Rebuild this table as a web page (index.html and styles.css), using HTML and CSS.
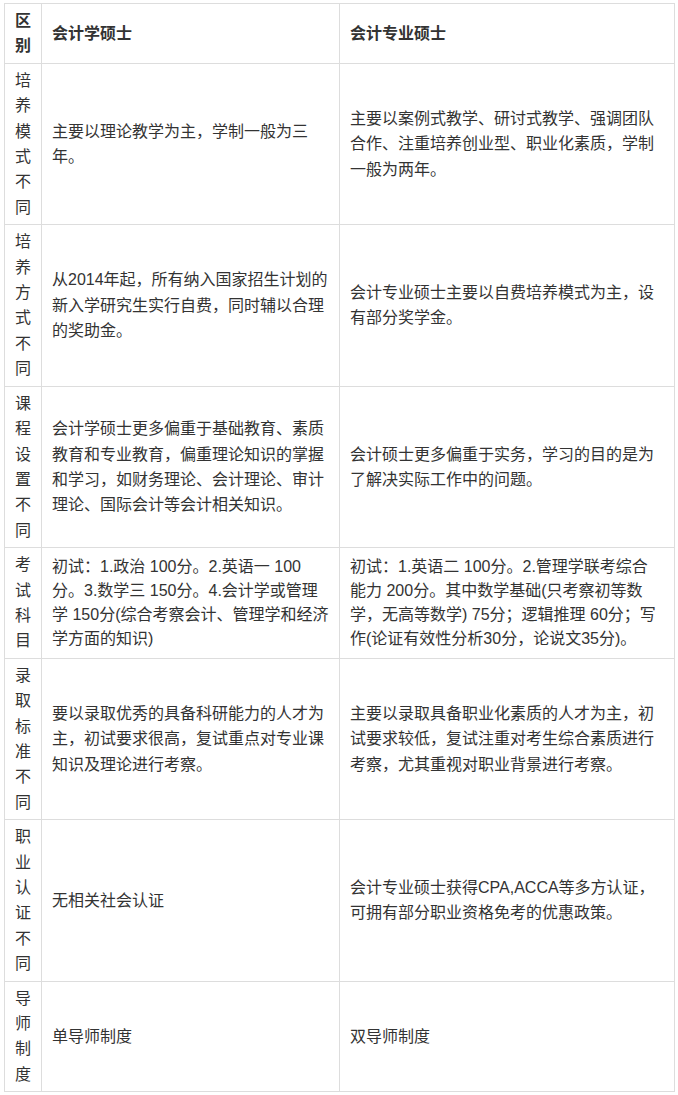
FILE: index.html
```html
<!DOCTYPE html>
<html lang="zh-CN">
<head>
<meta charset="utf-8">
<title>会计学硕士与会计专业硕士区别</title>
<link rel="stylesheet" href="styles.css">
</head>
<body>
<div class="page">
  <table class="compare">
    <colgroup>
      <col class="c1">
      <col class="c2">
      <col class="c3">
    </colgroup>
    <thead>
      <tr>
        <th>区别</th>
        <th>会计学硕士</th>
        <th>会计专业硕士</th>
      </tr>
    </thead>
    <tbody>
      <tr>
        <td>培养模式不同</td>
        <td>主要以理论教学为主，学制一般为三年。</td>
        <td>主要以案例式教学、研讨式教学、强调团队合作、注重培养创业型、职业化素质，学制一般为两年。</td>
      </tr>
      <tr>
        <td>培养方式不同</td>
        <td>从2014年起，所有纳入国家招生计划的新入学研究生实行自费，同时辅以合理的奖助金。</td>
        <td>会计专业硕士主要以自费培养模式为主，设有部分奖学金。</td>
      </tr>
      <tr>
        <td>课程设置不同</td>
        <td>会计学硕士更多偏重于基础教育、素质教育和专业教育，偏重理论知识的掌握和学习，如财务理论、会计理论、审计理论、国际会计等会计相关知识。</td>
        <td>会计硕士更多偏重于实务，学习的目的是为了解决实际工作中的问题。</td>
      </tr>
      <tr>
        <td>考试科目</td>
        <td class="mixed">初试：1.政治 100分。2.英语一 100分。3.数学三 150分。4.会计学或管理学 150分(综合考察会计、管理学和经济学方面的知识)</td>
        <td class="mixed">初试：1.英语二 100分。2.管理学联考综合<br>能力 200分。其中数学基础(只考察初等数<br>学，无高等数学) 75分；逻辑推理 60分；写<br>作(论证有效性分析30分，论说文35分)。</td>
      </tr>
      <tr>
        <td>录取标准不同</td>
        <td>要以录取优秀的具备科研能力的人才为主，初试要求很高，复试重点对专业课知识及理论进行考察。</td>
        <td>主要以录取具备职业化素质的人才为主，初试要求较低，复试注重对考生综合素质进行考察，尤其重视对职业背景进行考察。</td>
      </tr>
      <tr>
        <td>职业认证不同</td>
        <td>无相关社会认证</td>
        <td>会计专业硕士获得CPA,ACCA等多方认证，可拥有部分职业资格免考的优惠政策。</td>
      </tr>
      <tr>
        <td>导师制度</td>
        <td>单导师制度</td>
        <td>双导师制度</td>
      </tr>
    </tbody>
  </table>
</div>
</body>
</html>
```

FILE: styles.css
```css
html, body {
  margin: 0;
  padding: 0;
  background: #ffffff;
}

.page {
  padding: 3px 0 0 4px;
}

.compare {
  border-collapse: collapse;
  table-layout: fixed;
  width: 670px;
  font-family: "Liberation Sans", "Noto Sans CJK SC", sans-serif;
  font-size: 16px;
  line-height: 25.4px;
  color: #333333;
}

.c1 { width: 37px; }
.c2 { width: 298px; }
.c3 { width: 335px; }

.compare th,
.compare td {
  border: 1px solid #dddddd;
  padding: 4px 10px;
  vertical-align: middle;
  text-align: left;
  word-break: break-all;
}

.compare th {
  font-weight: bold;
}

.compare td.mixed {
  line-height: 24px;
}
```
